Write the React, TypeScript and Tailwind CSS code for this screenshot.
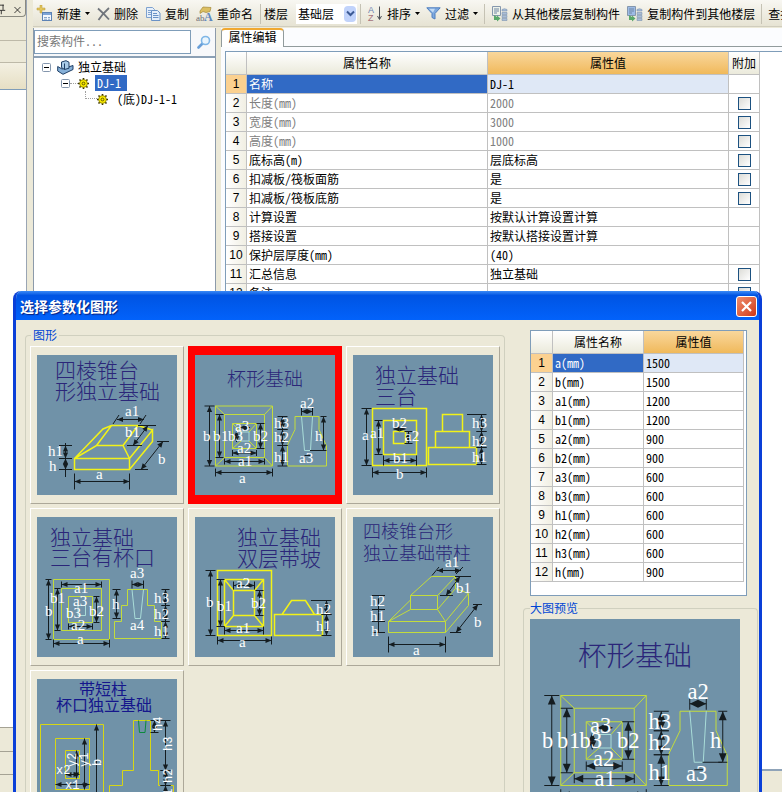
import React from "react";

const CJK = "font-['Noto_Sans_Mono_CJK_SC','Noto_Sans_CJK_SC',sans-serif]";

/* ---------- drawing primitives ---------- */

type Pt = [number, number];

function Dim({ from, to, tick = 0 }: { from: Pt; to: Pt; tick?: number }) {
  const dx = to[0] - from[0];
  const dy = to[1] - from[1];
  const len = Math.hypot(dx, dy);
  const ux = dx / len;
  const uy = dy / len;
  const s = Math.min(6, len / 2);
  const head = (p: Pt, dir: number) => {
    const bx = p[0] + ux * s * dir;
    const by = p[1] + uy * s * dir;
    return `${p[0]},${p[1]} ${bx - uy * 2.6},${by + ux * 2.6} ${bx + uy * 2.6},${by - ux * 2.6}`;
  };
  return (
    <g stroke="#141c20" fill="#141c20">
      <path d={`M${from[0]} ${from[1]}L${to[0]} ${to[1]}`} vectorEffect="non-scaling-stroke" />
      <polygon points={head(from, 1)} stroke="none" />
      <polygon points={head(to, -1)} stroke="none" />
      {tick > 0 &&
        [from, to].map((p, i) => (
          <path
            key={i}
            d={`M${p[0] - uy * tick} ${p[1] + ux * tick}L${p[0] + uy * tick} ${p[1] - ux * tick}`}
            vectorEffect="non-scaling-stroke"
          />
        ))}
    </g>
  );
}

const Ink = ({ d }: { d: string }) => (
  <path d={d} stroke="#141c20" fill="none" vectorEffect="non-scaling-stroke" />
);
const Pale = ({ d }: { d: string }) => (
  <path d={d} stroke="#a9dcd8" fill="none" vectorEffect="non-scaling-stroke" />
);
const Bright = ({ d }: { d: string }) => <path d={d} stroke="#f2f218" strokeWidth={1.5} fill="none" />;
const Thin = ({ d }: { d: string }) => (
  <path d={d} stroke="#c3dc3c" fill="none" vectorEffect="non-scaling-stroke" />
);

type Label = [string, number, number];

const Labels = ({ items }: { items: Label[] }) => (
  <g fill="#ffffff" fontSize={15} className="font-['Liberation_Serif',serif]">
    {items.map(([t, x, y], i) => (
      <text key={i} x={x} y={y}>
        {t}
      </text>
    ))}
  </g>
);

const Title = ({ lines, size = 20 }: { lines: Label[]; size?: number }) => (
  <g fill="#2b2679" fontSize={size} className="font-['Noto_Sans_CJK_SC',sans-serif] font-light">
    {lines.map(([t, x, y]) => (
      <text key={t} x={x} y={y}>
        {t}
      </text>
    ))}
  </g>
);

function Board({ className, children }: { className: string; children: React.ReactNode }) {
  return (
    <svg viewBox="0 0 140 140" className={`block bg-[#7092a8] ${className}`}>
      {children}
    </svg>
  );
}

/* ---------- foundation shapes ---------- */

const Pyramid = () => (
  <>
    <Title lines={[["四棱锥台", 18, 23], ["形独立基础", 18, 44]]} size={21} />
    <Bright d="M37.5 103.5H92.5V114.5H37.5ZM92.5 114.5L115.5 86.5V75L92.5 103.5M37.5 103.5L59.5 90.5H86L92.5 103.5M59.5 90.5L74.5 70.5H101L86 90.5M37.5 103.5L66 74L74.5 70.5M101 70.5L115.5 75" />
    <Dim from={[37.5, 126.5]} to={[92.5, 126.5]} tick={8} />
    <Dim from={[80, 64.5]} to={[107, 64.5]} />
    <Ink d="M76 69L82 60M103 69L109 60M101 70.5H119M90 90.5H105M120 86.5H132M98 114.5H111M22 90.5H35M22 103.5H35M22 114.5H35M28.5 88V122" />
    <Dim from={[111, 70.5]} to={[96, 90.5]} />
    <Dim from={[126, 86.5]} to={[104, 114.5]} />
    <Dim from={[28.5, 90.5]} to={[28.5, 103.5]} />
    <Dim from={[28.5, 103.5]} to={[28.5, 114.5]} />
    <Labels items={[["a1", 88, 61], ["b1", 88, 82], ["a", 59, 124], ["b", 121, 109], ["h1", 11, 101], ["h", 12, 116]]} />
  </>
);

const Cup = () => (
  <>
    <Title lines={[["杯形基础", 32, 31]]} size={19} />
    <Thin d="M20.5 51H77.5V111H20.5ZM29.5 59.5H69.5V102.5H29.5ZM37.5 68.5H61.5V93.5H37.5ZM20.5 51L29.5 59.5M77.5 51L69.5 59.5M20.5 111L29.5 102.5M77.5 111L69.5 102.5M37.5 68.5L46 77M61.5 68.5L54 77M37.5 93.5L46 86M61.5 93.5L54 86" />
    <Thin d="M100 61.5H124V74.5L131.5 91V111H92.5V90L100 74.5Z" />
    <Pale d="M46 77H54V86H46ZM106.5 61.5L109.5 95.5H115.5L117.5 61.5" />
    <Dim from={[14.5, 51]} to={[14.5, 111]} tick={5} />
    <Dim from={[24.5, 59.5]} to={[24.5, 102.5]} tick={4} />
    <Dim from={[65.5, 68.5]} to={[65.5, 93.5]} tick={4} />
    <Dim from={[37.5, 98]} to={[61.5, 98]} tick={3} />
    <Dim from={[29.5, 106.5]} to={[69.5, 106.5]} tick={3} />
    <Dim from={[20.5, 117.5]} to={[77.5, 117.5]} tick={4} />
    <Dim from={[45, 72.5]} to={[55, 72.5]} />
    <Dim from={[41.5, 76]} to={[41.5, 87]} />
    <Dim from={[87.5, 61.5]} to={[87.5, 74.5]} tick={5} />
    <Dim from={[87.5, 74.5]} to={[87.5, 90.5]} tick={5} />
    <Dim from={[87.5, 90.5]} to={[87.5, 111]} tick={5} />
    <Dim from={[106.5, 56.5]} to={[117.5, 56.5]} tick={4} />
    <Dim from={[128.5, 61.5]} to={[128.5, 95.5]} tick={3} />
    <Ink d="M109.5 100.5H115.5M115 95.5H128" />
    <Labels
      items={[
        ["b", 8, 86], ["b", 18, 86], ["1", 26, 86], ["b3", 33, 86], ["b2", 58, 86], ["a3", 40, 76], ["a2", 42, 98],
        ["a1", 43, 111], ["a", 44, 128], ["h3", 79, 73], ["h2", 79, 87], ["h1", 79, 107], ["h", 120, 86],
        ["a2", 105, 53], ["a3", 104, 108],
      ]}
    />
  </>
);

const ThreeStep = () => (
  <>
    <Title lines={[["独立基础", 22, 28], ["三台", 22, 49]]} size={21} />
    <Bright d="M19.5 53.5H73.5V110.5H19.5ZM30.5 65.5H63.5V99.5H30.5ZM40.5 76.5H52.5V88.5H40.5ZM89.5 59.5H109.5V76.5H89.5ZM82.5 76.5H116.5V92.5H82.5ZM75.5 92.5H123.5V109.5H75.5Z" />
    <Dim from={[13.5, 53.5]} to={[13.5, 110.5]} tick={5} />
    <Dim from={[25.5, 65.5]} to={[25.5, 99.5]} tick={4} />
    <Dim from={[30.5, 105.5]} to={[63.5, 105.5]} tick={5} />
    <Dim from={[19.5, 117.5]} to={[73.5, 117.5]} tick={5} />
    <Dim from={[40.5, 74]} to={[52.5, 74]} />
    <Dim from={[55.5, 76.5]} to={[55.5, 88.5]} tick={4} />
    <Dim from={[128.5, 59.5]} to={[128.5, 76.5]} tick={5} />
    <Dim from={[128.5, 76.5]} to={[128.5, 92.5]} tick={5} />
    <Dim from={[128.5, 92.5]} to={[128.5, 109.5]} tick={5} />
    <Ink d="M114 59.5H130" />
    <Labels
      items={[
        ["a", 9, 85], ["a1", 17, 83], ["b2", 39, 73], ["a2", 52, 86], ["b1", 40, 108], ["b", 43, 124],
        ["h3", 119, 73], ["h2", 119, 91], ["h1", 119, 107],
      ]}
    />
  </>
);

const ThreeStepCup = () => (
  <>
    <Title lines={[["独立基础", 13, 28], ["三台有杯口", 13, 48]]} size={21} />
    <Thin d="M16.5 62.5H72.5V122.5H16.5ZM24.5 71.5H64.5V113.5H24.5ZM31.5 79.5H55.5V105.5H31.5Z" />
    <Thin d="M90.5 72.5H110.5V88.5H117.5V104.5H124.5V121.5H77.5V104.5H84.5V88.5H90.5Z" />
    <Pale d="M41 88.5H48.5V98.5H41ZM95 72.5L98 101.5H103.5L106.5 72.5" />
    <Dim from={[11.5, 62.5]} to={[11.5, 122.5]} tick={3} />
    <Dim from={[20.5, 71.5]} to={[20.5, 113.5]} tick={3} />
    <Dim from={[24.5, 67.5]} to={[64.5, 67.5]} tick={3} />
    <Dim from={[59.5, 79.5]} to={[59.5, 105.5]} tick={3} />
    <Dim from={[31.5, 109.5]} to={[55.5, 109.5]} tick={3} />
    <Dim from={[16.5, 126.5]} to={[72.5, 126.5]} tick={4} />
    <Dim from={[79.5, 72.5]} to={[79.5, 101.5]} tick={4} />
    <Dim from={[95, 67.5]} to={[106.5, 67.5]} tick={4} />
    <Dim from={[128.5, 72.5]} to={[128.5, 88.5]} tick={4} />
    <Dim from={[128.5, 88.5]} to={[128.5, 104.5]} tick={4} />
    <Dim from={[128.5, 104.5]} to={[128.5, 121.5]} tick={4} />
    <Labels
      items={[
        ["b", 8, 99], ["b1", 13, 86], ["a1", 37, 76], ["a3", 36, 89], ["b3", 29, 101], ["b2", 52, 99], ["a2", 34, 113],
        ["a", 40, 127], ["h", 75, 92], ["a3", 93, 61], ["a4", 93, 113], ["h3", 117, 86], ["h2", 117, 102], ["h1", 117, 119],
      ]}
    />
  </>
);

const DoubleSlope = () => (
  <>
    <Title lines={[["独立基础", 42, 28], ["双层带坡", 42, 49]]} size={21} />
    <Bright d="M22.5 53.5H76.5V118.5H22.5ZM29.5 62.5H68.5V109.5H29.5ZM38.5 73.5H59.5V98.5H38.5ZM29.5 62.5L38.5 73.5M68.5 62.5L59.5 73.5M29.5 109.5L38.5 98.5M68.5 109.5L59.5 98.5M79.5 97.5H127.5V118.5H79.5ZM87 97.5L96.5 83.5H110.5L119.5 97.5" />
    <Dim from={[15.5, 53.5]} to={[15.5, 118.5]} tick={5} />
    <Dim from={[25.5, 62.5]} to={[25.5, 109.5]} tick={4} />
    <Dim from={[38.5, 68.5]} to={[59.5, 68.5]} tick={4} />
    <Dim from={[64.5, 73.5]} to={[64.5, 98.5]} tick={4} />
    <Dim from={[29.5, 113.5]} to={[68.5, 113.5]} tick={4} />
    <Dim from={[22.5, 123.5]} to={[76.5, 123.5]} tick={4} />
    <Dim from={[131.5, 83.5]} to={[131.5, 97.5]} tick={5} />
    <Dim from={[131.5, 97.5]} to={[131.5, 118.5]} tick={5} />
    <Ink d="M116 83.5H136" />
    <Labels items={[["b", 11, 90], ["b1", 22, 94], ["a2", 41, 71], ["b2", 56, 91], ["a1", 41, 116], ["a", 44, 130], ["h2", 121, 97], ["h1", 121, 114]]} />
  </>
);

const PyramidColumn = () => (
  <>
    <Title lines={[["四棱锥台形", 10, 21], ["独立基础带柱", 10, 43]]} size={18} />
    <Thin d="M35.5 104.5H92.5V115.5H35.5ZM92.5 115.5L115.5 88.5V76.5L92.5 104.5M57.5 78.5H84.5V92.5H57.5ZM57.5 78.5L78.5 59.5H102.5L84.5 78.5M102.5 59.5V71.5L84.5 92.5M35.5 104.5L57.5 92.5M35.5 104.5L57.5 83M92.5 104.5L84.5 92.5M102.5 71.5L115.5 76.5" />
    <Dim from={[35.5, 127.5]} to={[92.5, 127.5]} tick={8} />
    <Dim from={[84, 53.5]} to={[108, 53.5]} />
    <Dim from={[107, 59.5]} to={[93, 78.5]} />
    <Dim from={[125, 87.5]} to={[103, 115.5]} />
    <Ink d="M79 58.5L86 50M103 57L110 50M102 59.5H118M87 78.5H100M120 87.5H129M97 115.5H108M25.5 78.5V115.5M19 78.5H32M19 92.5H32M19 104.5H32M19 115.5H32" />
    <Labels items={[["a1", 92, 50], ["b1", 103, 76], ["b", 121, 110], ["a", 60, 138], ["h2", 17, 89], ["h1", 17, 104], ["h", 18, 119]]} />
  </>
);

const ShortColumn = () => {
  const upright: Label[] = [["y2", 39, 88], ["y1", 51, 88], ["b", 64, 87], ["h4", 125, 52], ["h3", 135, 72], ["h2", 135, 104], ["h1", 135, 124]];
  return (
    <>
      <g fill="#15168c" fontSize={16} className="font-['Noto_Sans_CJK_SC',sans-serif]">
        <text x={42} y={16}>带短柱</text>
        <text x={19} y={32}>杯口独立基础</text>
      </g>
      <g stroke="#d6d614" fill="none">
        <path d="M3.5 150V45.5H66.5V150M18.5 59.5H52.5V110.5H18.5ZM28.5 71.5H42.5V99.5H28.5Z" />
        <path d="M72.5 150V106.5H85.5V91.5H96.5V41.5H113.5V91.5H121.5V106.5H136.5V150" />
      </g>
      <path d="M101.5 41.5L102.5 53.5H108L109 41.5" stroke="#0b8a3c" fill="none" />
      <Dim from={[59.5, 45.5]} to={[59.5, 160]} />
      <Dim from={[47.5, 59.5]} to={[47.5, 110.5]} />
      <Dim from={[39.5, 71.5]} to={[39.5, 99.5]} />
      <Dim from={[28.5, 95.5]} to={[42.5, 95.5]} />
      <Dim from={[18.5, 105.5]} to={[52.5, 105.5]} />
      <Dim from={[117.5, 41.5]} to={[117.5, 53.5]} tick={4} />
      <Dim from={[128.5, 41.5]} to={[128.5, 91.5]} tick={5} />
      <Dim from={[128.5, 91.5]} to={[128.5, 106.5]} tick={5} />
      <Dim from={[128.5, 106.5]} to={[128.5, 136]} tick={5} />
      <g fill="#ffffff" fontSize={12} className="font-['Liberation_Mono',monospace]">
        <text x={19} y={95}>x2</text>
        <text x={28} y={110}>x1</text>
        {upright.map(([t, x, y]) => (
          <text key={t} transform={`translate(${x} ${y}) rotate(-90)`}>
            {t}
          </text>
        ))}
      </g>
    </>
  );
};

/* ---------- toolbar icons ---------- */

const NewIcon = () => (
  <svg className="h-[17px] w-[17px] shrink-0" viewBox="0 0 17 17">
    <path d="M4 0h2v3h3v2H6v3H4V5H1V3h3z" fill="#e3c65c" stroke="#b99a3a" strokeWidth=".5" />
    <rect x="6.5" y="7.5" width="9" height="8" fill="#f4f8fd" stroke="#5d83b5" />
    <path d="M7 8h8v2H7z" fill="#7ea4d6" />
    <path d="M8 12.5h3M12 12.5h2M8 14.2h3M12 14.2h2" stroke="#8aa6c9" />
  </svg>
);
const DeleteIcon = () => (
  <svg className="h-[14px] w-[13px] shrink-0" viewBox="0 0 13 14">
    <path d="M1 1.5C5 5 9 9 12 12.500M12 1C8 4.500 4 9 1.500 13" stroke="#70757c" strokeWidth="1.8" fill="none" />
  </svg>
);
const CopyIcon = () => (
  <svg className="h-[14px] w-[16px] shrink-0" viewBox="0 0 16 14">
    <path d="M1.500 .5h6l2 2v8h-8z" fill="#e6effa" stroke="#7ea2cf" />
    <path d="M3 3.500h4M3 5.500h5M3 7.500h3" stroke="#7ea2cf" />
    <path d="M6.500 3.500h6l2.500 2.500v7.500h-8.500z" fill="#e6effa" stroke="#6a92c6" />
    <path d="M8 6.500h4M8 8.500h5.500M8 10.500h5.500" stroke="#6a92c6" />
  </svg>
);
const RenameIcon = () => (
  <svg className="h-[16px] w-[17px] shrink-0 overflow-visible" viewBox="0 0 17 16">
    <path d="M4 5L7 1l8 .5-1 4-4 1-3-1-3 2z" fill="#dcbf62" stroke="#a58a3a" strokeWidth=".7" />
    <text x="0" y="15" fontSize="9" fill="#6b6b72" className="font-['Liberation_Serif',serif]">ab</text>
    <text x="8" y="15" fontSize="12" fill="#5d86bd" className="font-['Liberation_Serif',serif] font-bold">A</text>
  </svg>
);
const SortIcon = () => (
  <svg className="h-[17px] w-[16px] shrink-0 overflow-visible" viewBox="0 0 16 17">
    <text x="1" y="8" fontSize="9" fill="#6a7fae" className="font-['Liberation_Sans',sans-serif]">A</text>
    <text x="1" y="16" fontSize="9" fill="#a4707a" className="font-['Liberation_Sans',sans-serif]">Z</text>
    <path d="M12.500 1.500V14M10.500 11l2 3.500 2-3.500" stroke="#4c5058" fill="none" />
  </svg>
);
const FilterIcon = () => (
  <svg className="h-[13px] w-[15px] shrink-0" viewBox="0 0 15 13">
    <path d="M.8 .8h13.400L9 6.500v5.500l-3-1.500v-4z" fill="#7fa9de" stroke="#4f7fbf" />
    <path d="M3 1.800h6L7 5.500z" fill="#c3dbf5" />
  </svg>
);
const CopyFloorIcon = ({ tone }: { tone: string }) => (
  <svg className="h-[17px] w-[17px] shrink-0" viewBox="0 0 17 17">
    <path d="M1.500 1.500h8v9h-8z" fill={tone} stroke="#8597ad" />
    <path d="M3 4h5M3 6h5M3 8h3" stroke="#6f86a3" />
    <path d="M11 4.500q2.500-1.500 5 0v1.500h-5zM11 7.500h5v2h-5zM11 10.500h5v2h-5zM11 13.500h5v2h-5z" fill="#a9bdd8" stroke="#7c93b2" strokeWidth=".6" />
    <path d="M3 10v5h3v1.500l3.500-3-3.500-3V12z" fill="#59a86a" />
  </svg>
);
const Caret = () => (
  <svg className="h-[3px] w-[5px] shrink-0" viewBox="0 0 5 3">
    <path d="M0 0h5L2.500 3z" fill="#000" />
  </svg>
);
const Separator = () => <span className="h-[20px] w-px shrink-0 bg-[#c5c2b4]" />;

const Tool = ({ icon, label, caret }: { icon?: React.ReactNode; label: string; caret?: boolean }) => (
  <button type="button" className="flex shrink-0 items-center gap-1 whitespace-nowrap">
    {icon}
    {label}
    {caret && <Caret />}
  </button>
);

/* ---------- tree icons ---------- */

const Minus = () => (
  <svg className="h-[9px] w-[9px] shrink-0" viewBox="0 0 9 9">
    <rect x=".5" y=".5" width="8" height="8" rx="1" fill="#fff" stroke="#8496ad" />
    <path d="M2 4.500h5" stroke="#000" />
  </svg>
);
const FootingIcon = () => (
  <svg className="h-[15px] w-[17px] shrink-0" viewBox="0 0 17 15">
    <path d="M.7 6.500L5 9l11-3.500v4L6 14.300.7 11z" fill="#86b0d8" stroke="#1f3f66" />
    <path d="M4.500 2L9 .7l3 1.500v6L7.500 9.500l-3-2z" fill="#a9cbe8" stroke="#1f3f66" />
    <path d="M7.500 3.500v6" stroke="#1f3f66" />
  </svg>
);
const GearIcon = () => (
  <svg className="h-[11px] w-[11px] shrink-0" viewBox="0 0 11 11">
    <path d="M5.500 0v11M0 5.500h11M1.500 1.500l8 8M9.500 1.500l-8 8" stroke="#3a3200" strokeWidth="1.600" />
    <circle cx="5.500" cy="5.500" r="3.900" fill="#f8ea00" stroke="#6a5e00" strokeWidth=".6" />
    <circle cx="5.500" cy="5.500" r="1.400" fill="none" stroke="#4a4000" strokeWidth=".8" />
  </svg>
);

/* ---------- data ---------- */

type Row = { name: string; value: string; dim?: boolean; check?: boolean };

const properties: Row[] = [
  { name: "名称", value: "DJ-1" },
  { name: "长度(mm)", value: "2000", dim: true, check: true },
  { name: "宽度(mm)", value: "3000", dim: true, check: true },
  { name: "高度(mm)", value: "1000", dim: true, check: true },
  { name: "底标高(m)", value: "层底标高", check: true },
  { name: "扣减板/筏板面筋", value: "是", check: true },
  { name: "扣减板/筏板底筋", value: "是", check: true },
  { name: "计算设置", value: "按默认计算设置计算" },
  { name: "搭接设置", value: "按默认搭接设置计算" },
  { name: "保护层厚度(mm)", value: "(40)" },
  { name: "汇总信息", value: "独立基础", check: true },
  { name: "备注", value: "", check: true },
];

const parameters: Row[] = [
  { name: "a(mm)", value: "1500" },
  { name: "b(mm)", value: "1500" },
  { name: "a1(mm)", value: "1200" },
  { name: "b1(mm)", value: "1200" },
  { name: "a2(mm)", value: "900" },
  { name: "b2(mm)", value: "900" },
  { name: "a3(mm)", value: "600" },
  { name: "b3(mm)", value: "600" },
  { name: "h1(mm)", value: "600" },
  { name: "h2(mm)", value: "600" },
  { name: "h3(mm)", value: "600" },
  { name: "h(mm)", value: "900" },
];

const shapes = [
  { label: "四棱锥台形独立基础", art: <Pyramid /> },
  { label: "杯形基础", art: <Cup />, selected: true },
  { label: "独立基础三台", art: <ThreeStep /> },
  { label: "独立基础三台有杯口", art: <ThreeStepCup /> },
  { label: "独立基础双层带坡", art: <DoubleSlope /> },
  { label: "四棱锥台形独立基础带柱", art: <PyramidColumn /> },
  { label: "带短柱杯口独立基础", art: <ShortColumn /> },
];

/* ---------- tables ---------- */

const HEAD = "border-r border-b border-[#c0c0c0] p-0 font-normal";
const PLAIN = "bg-linear-to-b from-white to-[#ebeadb]";
const GOLD = "bg-linear-to-b from-[#f9d79b] to-[#f0b95a]";

function PropertyTable({ rows, widths, withCheck }: { rows: Row[]; widths: string[]; withCheck?: boolean }) {
  return (
    <table className="w-full table-fixed border-separate border-spacing-0">
      <colgroup>
        {widths.map((w, i) => (
          <col key={i} className={w} />
        ))}
      </colgroup>
      <thead>
        <tr className="h-[23px]">
          <th className={`${HEAD} ${PLAIN}`} />
          <th className={`${HEAD} ${PLAIN}`}>属性名称</th>
          <th className={`${HEAD} ${GOLD}`}>属性值</th>
          {withCheck && <th className={`${HEAD} ${PLAIN}`}>附加</th>}
        </tr>
      </thead>
      <tbody>
        {rows.map((r, i) => {
          const cell = "h-[19px] border-r border-b border-[#c0c0c0] py-0 leading-[18px] whitespace-nowrap";
          const first = i === 0;
          const ink = r.dim ? "text-[#808080]" : "text-black";
          return (
            <tr key={r.name}>
              <th
                className={`${cell} px-0 text-center font-['Liberation_Sans',sans-serif] font-normal ${
                  first ? "bg-[#fbd190]" : "bg-linear-to-r from-white to-[#f1efe3]"
                }`}
              >
                {i + 1}
              </th>
              <td className={`${cell} px-[2px] ${first ? "bg-[#316ac5] text-white" : ink}`}>{r.name}</td>
              <td className={`${cell} px-[2px] ${first ? "bg-[#dfe8f6]" : ""} ${ink}`}>{r.value}</td>
              {withCheck && (
                <td className={`${cell} px-0`}>
                  {r.check && (
                    <input
                      type="checkbox"
                      aria-label={`附加 ${r.name}`}
                      className="mx-auto block h-[13px] w-[13px] appearance-none border border-[#1c5180] bg-linear-to-br from-[#dcdcd7] to-white"
                    />
                  )}
                </td>
              )}
            </tr>
          );
        })}
      </tbody>
    </table>
  );
}

/* ---------- window panels ---------- */

function DockStrip() {
  return (
    <aside className="flex w-[27px] shrink-0 flex-col border-r border-[#9aa5b4]">
      <div className="flex h-[17px] items-center justify-end gap-[8px] rounded-br border-r border-b border-[#8a8a80] pt-[3px] pr-1">
        <svg className="h-[11px] w-[7px]" viewBox="0 0 7 11">
          <path d="M0 .5h4.500M3.500 0v6M0 6.500h6M1.500 6.500V11" stroke="#222" fill="none" />
        </svg>
        <svg className="h-[8px] w-[8px]" viewBox="0 0 8 8">
          <path d="M.5 .5l7 7M7.500 .5l-7 7" stroke="#222" fill="none" />
        </svg>
      </div>
      <div className="h-[24px] border-b border-[#bdb9a8]" />
      <div className="h-[22px] border-b border-[#bdb9a8]" />
      <div className="h-[27px] border-b border-[#7f9db9] bg-linear-to-b from-[#f3f0e2] to-[#e6dfc4]" />
      <div className="flex-1 bg-white" />
      <div className="h-[24px] border-t border-[#a5a294]" />
      <div className="h-[23px] border-t border-[#a5a294]" />
      <div className="h-[18px] border-t border-[#a5a294]" />
    </aside>
  );
}

function Toolbar() {
  return (
    <div className="flex h-[27px] shrink-0 items-center overflow-hidden border-b border-[#d0cdbd] bg-linear-to-b from-[#f8f7f2] to-[#e6e3d3] pt-px pl-[3px]">
      <div className="flex shrink-0 items-center gap-[7px]">
        <Tool icon={<NewIcon />} label="新建" caret />
        <Tool icon={<DeleteIcon />} label="删除" />
        <Tool icon={<CopyIcon />} label="复制" />
        <Tool icon={<RenameIcon />} label="重命名" />
        <Separator />
      </div>
      <div className="flex shrink-0 items-center gap-[8px] px-[3px]">
        <label htmlFor="floor">楼层</label>
        <div className="relative flex">
          <select id="floor" className="h-[20px] w-[61px] appearance-none bg-white pl-[2px] outline-none">
            <option>基础层</option>
          </select>
          <span className="pointer-events-none absolute top-[2px] right-px flex h-[16px] w-[12px] items-center justify-center rounded-sm bg-[#c1d3fb]">
            <svg className="h-[7px] w-[9px]" viewBox="0 0 9 7">
              <path d="M1 1.500l3.500 3.500L8 1.500" stroke="#3c5a94" strokeWidth="2" fill="none" />
            </svg>
          </span>
        </div>
      </div>
      <div className="flex shrink-0 items-center gap-[6px]">
        <Separator />
        <Tool icon={<SortIcon />} label="排序" caret />
        <Tool icon={<FilterIcon />} label="过滤" caret />
        <Separator />
        <Tool icon={<CopyFloorIcon tone="#eef2ea" />} label="从其他楼层复制构件" />
        <Tool icon={<CopyFloorIcon tone="#9dbbe6" />} label="复制构件到其他楼层" />
        <Separator />
        <Tool label="查找" />
      </div>
    </div>
  );
}

function ComponentTree() {
  return (
    <section className="flex w-[183px] shrink-0 flex-col border-x border-[#8c9aaa] bg-white">
      <div className="flex h-[30px] items-center gap-[6px] border-b-2 border-[#8ba0b5] bg-[#f7f8fa]">
        <input
          type="text"
          aria-label="搜索构件"
          placeholder="搜索构件..."
          className="h-[24px] w-[157px] border border-[#7f9db9] bg-white px-[2px] pb-[3px] outline-none placeholder:text-[#777]"
        />
        <button type="button" aria-label="搜索">
          <svg className="h-[14px] w-[14px]" viewBox="0 0 14 14">
            <path d="M1.500 12.500L5.500 8.500" stroke="#6a9fd8" strokeWidth="2.600" strokeLinecap="round" />
            <circle cx="8.500" cy="5.500" r="4" fill="#eaf5fd" stroke="#7fb6e6" strokeWidth="1.600" />
          </svg>
        </button>
      </div>
      <ul className="pt-px leading-4">
        <li>
          <div className="flex h-4 items-center pl-[8px]">
            <Minus />
            <span className="w-[6px]" />
            <FootingIcon />
            <span className="pl-[4px]">独立基础</span>
          </div>
          <ul>
            <li>
              <div className="flex h-4 items-center pl-[27px]">
                <Minus />
                <span className="w-[8px] border-b border-dotted border-[#a0a0a0]" />
                <GearIcon />
                <span className="ml-[6px] bg-[#316ac5] pr-[6px] pl-[2px] text-white">DJ-1</span>
              </div>
              <ul>
                <li className="flex h-4 items-center pl-[51px]">
                  <span className="h-full w-[12px]">
                    <span className="block h-1/2 border-b border-l border-dotted border-[#a0a0a0]" />
                  </span>
                  <GearIcon />
                  <span className="pl-[9px]">(底)DJ-1-1</span>
                </li>
              </ul>
            </li>
          </ul>
        </li>
      </ul>
    </section>
  );
}

function PropertyEditor() {
  return (
    <section className="flex min-w-0 flex-1 flex-col bg-[#fbfcfe]">
      <div className="flex h-[19px] shrink-0" role="tablist">
        <button
          type="button"
          role="tab"
          aria-selected="true"
          className="w-[63px] rounded-t-sm border-t-2 border-r border-l border-t-[#f0a830] border-r-[#919b9c] border-l-[#919b9c] bg-white pb-[3px] text-center leading-[14px]"
        >
          属性编辑
        </button>
        <div className="flex-1 border-b border-[#919b9c]" />
      </div>
      <div className="mt-[4px] ml-[4px] min-h-0 flex-1 border-t border-l border-[#7f9db9] bg-white">
        <div className="w-[534px]">
          <PropertyTable rows={properties} widths={["w-[21px]", "w-[241px]", "w-[241px]", "w-[31px]"]} withCheck />
        </div>
      </div>
    </section>
  );
}

function ShapeDialog() {
  return (
    <div
      role="dialog"
      aria-labelledby="dialog-title"
      className="absolute top-[291px] right-[20px] bottom-0 left-[13px] flex flex-col overflow-hidden rounded-t-lg border-x-3 border-[#0a3fd8] bg-[#ece9d8]"
    >
      <header className="-mx-[3px] flex h-[29px] shrink-0 items-center justify-between bg-linear-to-b from-[#3a8af6] from-0% via-[#0054e3] via-15% to-[#0262fb] pt-px pr-[5px] pl-[7px]">
        <h1 id="dialog-title" className="font-['Noto_Sans_CJK_SC',sans-serif] text-sm font-bold text-white text-shadow-[1px_1px_1px_#0a1f7a]">
          选择参数化图形
        </h1>
        <button
          type="button"
          aria-label="关闭"
          className="flex h-[21px] w-[21px] items-center justify-center rounded-[3px] border border-white bg-linear-to-br from-[#ee8d6c] to-[#cf3410]"
        >
          <svg className="h-[11px] w-[11px]" viewBox="0 0 11 11">
            <path d="M1 1l9 9M10 1l-9 9" stroke="#fff" strokeWidth="2.200" />
          </svg>
        </button>
      </header>
      <div className="flex flex-1 items-start justify-between pt-[8px] pr-[1px] pl-[9px]">
        <fieldset className="h-full shrink-0 rounded-t-sm border border-b-0 border-[#d0d0bf] px-[4px] pt-[4px]">
          <legend className="ml-px px-[2px] leading-[14px] text-[#0046d5]">图形</legend>
          <div className="grid grid-cols-3 gap-x-[4px] gap-y-[4px]">
            {shapes.map((s) => (
              <button
                key={s.label}
                type="button"
                aria-label={s.label}
                aria-pressed={!!s.selected}
                className={`flex h-[158px] w-[154px] items-center justify-center border ${
                  s.selected ? "border-[#ff0000] bg-[#ff0000]" : "border-t-white border-r-[#aca899] border-b-[#aca899] border-l-white"
                }`}
              >
                <Board className="h-[140px] w-[140px]">{s.art}</Board>
              </button>
            ))}
          </div>
        </fieldset>
        <div className="w-[235px] shrink-0">
          <div className="mt-[2px] mr-[11px] ml-[7px] h-[266px] border border-[#7f9db9] bg-white">
            <div className="w-[213px]">
              <PropertyTable rows={parameters} widths={["w-[22px]", "w-[91px]", "w-[100px]"]} />
            </div>
          </div>
          <fieldset className="mt-[5px] rounded-t-sm border border-b-0 border-[#d0d0bf] px-[6px] pt-[4px]">
            <legend className="leading-[14px] text-[#0046d5]">大图预览</legend>
            <Board className="h-[210px] w-[210px]">
              <Cup />
            </Board>
          </fieldset>
        </div>
      </div>
    </div>
  );
}

export default function App() {
  return (
    <div className={`relative flex h-screen gap-[6px] overflow-hidden bg-[#ece9d8] text-xs text-black ${CJK}`}>
      <DockStrip />
      <main className="flex min-w-0 flex-1 flex-col">
        <Toolbar />
        <div className="flex min-h-0 flex-1 gap-[5px] border-b-2 border-[#8fa3b8] pt-[1px]">
          <ComponentTree />
          <PropertyEditor />
        </div>
        <div className="h-[21px] shrink-0" />
      </main>
      <ShapeDialog />
    </div>
  );
}
